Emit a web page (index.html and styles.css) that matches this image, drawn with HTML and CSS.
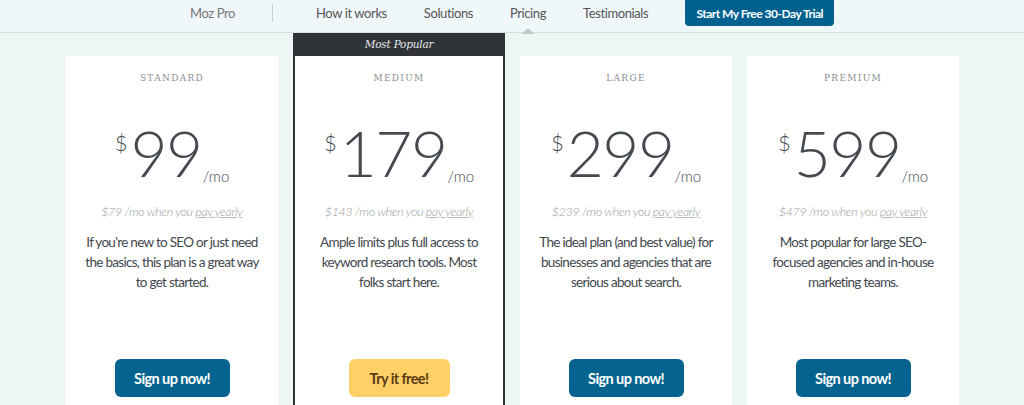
FILE: index.html
```html
<!DOCTYPE html>
<html>
<head>
<meta charset="utf-8">
<link rel="stylesheet" href="styles.css">
</head>
<body>
<header class="nav">
  <div class="nav-inner">
    <span class="brand">Moz Pro</span>
    <span class="sep"></span>
    <a class="link">How it works</a>
    <a class="link">Solutions</a>
    <a class="link active">Pricing</a>
    <a class="link">Testimonials</a>
    <a class="cta">Start My Free 30-Day Trial</a>
  </div>
</header>
<main class="plans">
  <section class="card">
    <div class="body">
      <h3 class="tier">STANDARD</h3>
      <div class="price"><span class="cur">$</span><span class="amt">99</span><span class="per">/mo</span></div>
      <p class="yearly">$79 /mo when you <u>pay yearly</u></p>
      <p class="desc">If you're new to SEO or just need the basics, this plan is a great way to get started.</p>
      <a class="btn">Sign up now!</a>
    </div>
  </section>
  <section class="card popular">
    <div class="ribbon">Most Popular</div>
    <div class="body">
      <h3 class="tier">MEDIUM</h3>
      <div class="price"><span class="cur">$</span><span class="amt">179</span><span class="per">/mo</span></div>
      <p class="yearly">$143 /mo when you <u>pay yearly</u></p>
      <p class="desc">Ample limits plus full access to keyword research tools. Most folks start here.</p>
      <a class="btn try">Try it free!</a>
    </div>
  </section>
  <section class="card">
    <div class="body">
      <h3 class="tier">LARGE</h3>
      <div class="price"><span class="cur">$</span><span class="amt">299</span><span class="per">/mo</span></div>
      <p class="yearly">$239 /mo when you <u>pay yearly</u></p>
      <p class="desc">The ideal plan (and best value) for businesses and agencies that are serious about search.</p>
      <a class="btn">Sign up now!</a>
    </div>
  </section>
  <section class="card">
    <div class="body">
      <h3 class="tier">PREMIUM</h3>
      <div class="price"><span class="cur">$</span><span class="amt">599</span><span class="per">/mo</span></div>
      <p class="yearly">$479 /mo when you <u>pay yearly</u></p>
      <p class="desc">Most popular for large SEO-focused agencies and in-house marketing teams.</p>
      <a class="btn">Sign up now!</a>
    </div>
  </section>
</main>
</body>
</html>
```
FILE: styles.css
```css
* { box-sizing: border-box; }
html, body { margin: 0; padding: 0; }
body {
  background: #eef6f5;
  font-family: Lato, "Liberation Sans", sans-serif;
  color: #444a50;
  height: 405px;
  overflow: hidden;
}
.nav {
  height: 33px;
  background: #f0f7fb;
  border-bottom: 1px solid #d6dfe2;
}
.nav-inner {
  display: flex;
  align-items: center;
  height: 26px;
  padding-left: 190px;
  font-size: 13px;
  letter-spacing: -0.4px;
  color: #666;
}
.brand { color: #777; }
.sep {
  width: 1px;
  height: 18px;
  background: #c8cfd2;
  margin: 0 43px 0 37px;
}
.link { color: #555; margin-right: 37px; position: relative; }
.link.active::after {
  content: "";
  position: absolute;
  left: 50%;
  bottom: -13px;
  margin-left: -7px;
  border-left: 7px solid transparent;
  border-right: 7px solid transparent;
  border-bottom: 6px solid #c5cacc;
}
.cta {
  height: 26px;
  width: 149px;
  display: flex;
  align-items: center;
  justify-content: center;
  background: #00618f;
  color: #fff;
  font-size: 12px;
  letter-spacing: -0.5px;
  font-weight: 700;
  border-radius: 0 0 4px 4px;
  align-self: flex-start;
  margin-left: 0;
}
.plans {
  display: flex;
  align-items: flex-start;
  gap: 15px;
  padding-left: 66px;
}
.card {
  width: 212px;
  margin-top: 23px;
}
.card .body {
  background: #fff;
  height: 400px;
  text-align: center;
  padding-top: 15px;
  display: flex;
  flex-direction: column;
  align-items: center;
}
.popular {
  margin-top: 0;
  background: #2f3338;
}
.ribbon {
  height: 23px;
  line-height: 23px;
  text-align: center;
  color: #e6e8ea;
  font-family: "DejaVu Serif", serif;
  font-style: italic;
  font-size: 10.5px;
  letter-spacing: -0.2px;
}
.popular .body {
  margin: 0 2px;
}
.tier {
  margin: 0;
  font-family: "DejaVu Serif", serif;
  font-weight: 400;
  font-size: 9px;
  letter-spacing: 1.3px;
  color: #8a8e91;
  line-height: 14px;
}
.price {
  display: flex;
  align-items: flex-start;
  margin-top: 36px;
  color: #444a50;
  height: 70px;
}
.cur {
  font-size: 22px;
  font-weight: 300;
  margin-top: 8px;
  margin-right: 3px;
}
.amt {
  font-size: 64px;
  font-weight: 300;
  line-height: 64px;
  letter-spacing: -1.5px;
}
.per {
  font-size: 15px;
  font-weight: 300;
  align-self: flex-end;
  margin-bottom: 6px;
  margin-left: 1px;
}
.yearly {
  margin: 13px 0 0;
  font-size: 12.5px;
  letter-spacing: -0.4px;
  font-style: italic;
  font-weight: 300;
  color: #9a9ea1;
}
.yearly u { text-decoration-color: #b5b8ba; }
.desc {
  margin: 13px 0 0;
  width: 180px;
  font-size: 13.5px;
  letter-spacing: -0.7px;
  line-height: 20px;
  color: #42474d;
  height: 108px;
}
.btn {
  width: 115px;
  height: 38px;
  display: flex;
  align-items: center;
  justify-content: center;
  background: #05648f;
  color: #fff;
  font-weight: 700;
  font-size: 14.5px;
  letter-spacing: -0.6px;
  border-radius: 6px;
  margin-top: 19px;
}
.btn.try {
  width: 101px;
  background: #fed065;
  color: #5c3b14;
}
```
